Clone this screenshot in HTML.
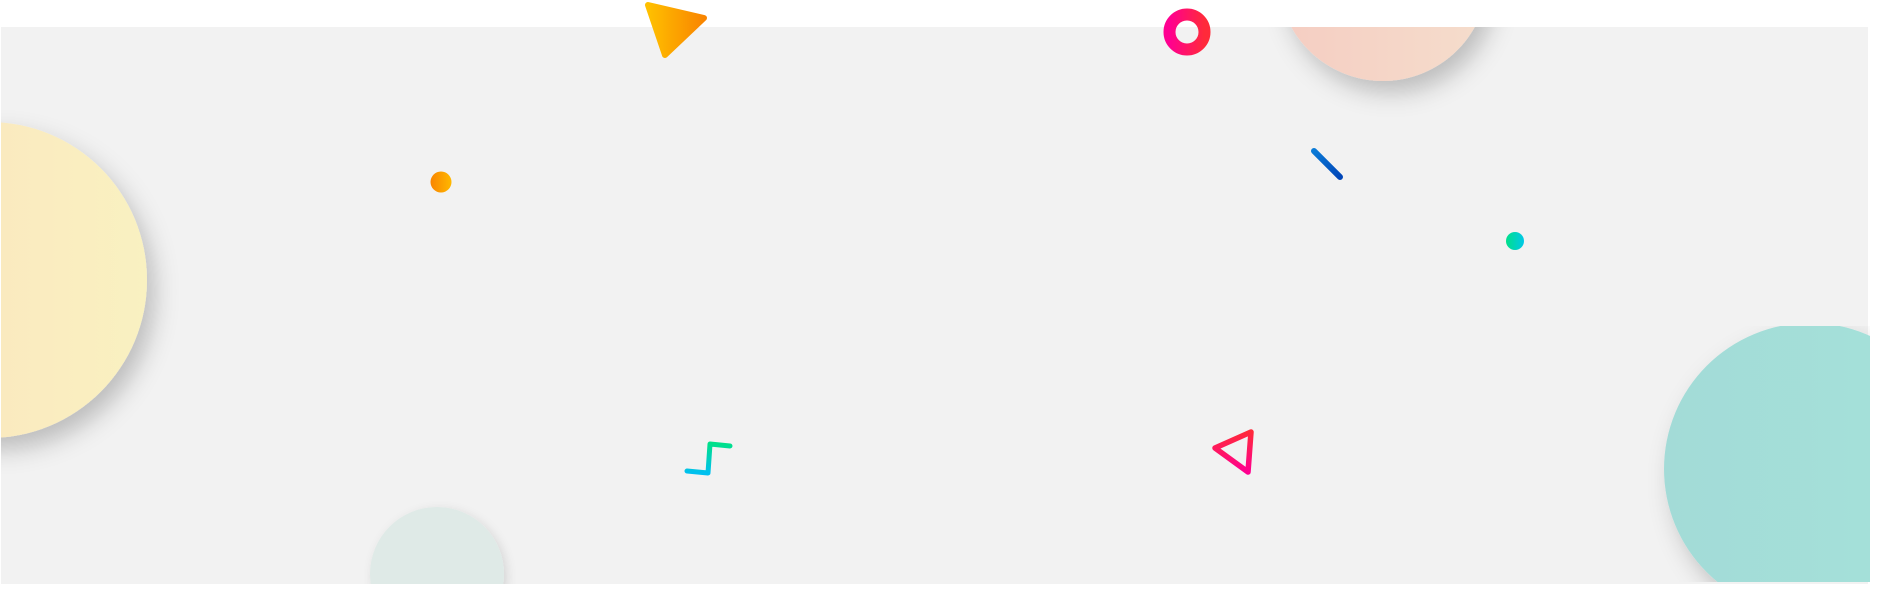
<!DOCTYPE html>
<html><head><meta charset="utf-8"><style>
html,body{margin:0;padding:0;background:#fff;width:1895px;height:610px;overflow:hidden}
svg{position:absolute;left:0;top:0;display:block}
</style></head><body>
<svg width="1895" height="610" viewBox="0 0 1895 610" xmlns="http://www.w3.org/2000/svg">
<defs>
<filter id="sh" x="-50%" y="-50%" width="200%" height="200%"><feDropShadow dx="8" dy="12" stdDeviation="12" flood-color="#000" flood-opacity="0.22"/></filter>
<filter id="sh2" x="-50%" y="-50%" width="200%" height="200%"><feDropShadow dx="3" dy="3" stdDeviation="5" flood-color="#000" flood-opacity="0.12"/></filter>
<clipPath id="cp"><rect x="1" y="27" width="1867" height="557"/></clipPath>
<clipPath id="cpt"><rect x="1" y="326" width="1869" height="256"/></clipPath>
<linearGradient id="gy" x1="0" x2="1"><stop offset="0" stop-color="#fce2bd"/><stop offset="1" stop-color="#f9f1c1"/></linearGradient>
<linearGradient id="gp" x1="0" x2="1"><stop offset="0" stop-color="#f5cdc2"/><stop offset="1" stop-color="#f5ddcc"/></linearGradient>
<linearGradient id="gt" x1="0" x2="1"><stop offset="0" stop-color="#a3dbd7"/><stop offset="1" stop-color="#a4e2da"/></linearGradient>
<linearGradient id="go" x1="0" x2="1"><stop offset="0" stop-color="#ffc000"/><stop offset="1" stop-color="#f98500"/></linearGradient>
<linearGradient id="go2" x1="0" x2="1"><stop offset="0" stop-color="#f98500"/><stop offset="1" stop-color="#ffb800"/></linearGradient>
<linearGradient id="gr" x1="0" x2="1"><stop offset="0" stop-color="#ff0090"/><stop offset="1" stop-color="#ff2a3a"/></linearGradient>
<linearGradient id="gr2" x1="0" y1="0" x2="0" y2="1"><stop offset="0" stop-color="#ff2a3a"/><stop offset="1" stop-color="#ff0090"/></linearGradient>
<linearGradient id="gb" x1="0" y1="0" x2="1" y2="1"><stop offset="0" stop-color="#0a7ad6"/><stop offset="1" stop-color="#0046b8"/></linearGradient>
<linearGradient id="gc" x1="0" x2="1"><stop offset="0" stop-color="#00e08a"/><stop offset="1" stop-color="#00c8e8"/></linearGradient>
<linearGradient id="gm" x1="0" y1="0" x2="0" y2="1"><stop offset="0" stop-color="#00e08a"/><stop offset="1" stop-color="#00c0f0"/></linearGradient>
</defs>
<rect x="1" y="27" width="1867" height="557" fill="#f2f2f2"/>
<g clip-path="url(#cp)">
<circle cx="-11" cy="280" r="158" fill="url(#gy)" filter="url(#sh)"/>
<circle cx="1383" cy="-24" r="105" fill="url(#gp)" filter="url(#sh)"/>
<circle cx="437" cy="574" r="67" fill="#dfeae7" filter="url(#sh2)"/>
</g>
<g clip-path="url(#cpt)">
<circle cx="1810" cy="469" r="146" fill="url(#gt)" filter="url(#sh)"/>
</g>
<path d="M648 5 L704 18 L665 55 Z" fill="url(#go)" stroke="url(#go)" stroke-width="6" stroke-linejoin="round"/>
<circle cx="441" cy="182" r="10.5" fill="url(#go2)"/>
<circle cx="1187" cy="32" r="17.5" fill="none" stroke="url(#gr)" stroke-width="12"/>
<line x1="1314" y1="151" x2="1340" y2="177" stroke="url(#gb)" stroke-width="6" stroke-linecap="round"/>
<circle cx="1515" cy="241" r="9" fill="url(#gc)"/>
<path d="M1215 448 L1251 432 L1248 472 Z" fill="none" stroke="url(#gr2)" stroke-width="5.5" stroke-linejoin="round"/>
<path d="M687 471 L708 473 L710 444 L730 446" fill="none" stroke="url(#gm)" stroke-width="5" stroke-linecap="round" stroke-linejoin="round"/>
</svg>
</body></html>
